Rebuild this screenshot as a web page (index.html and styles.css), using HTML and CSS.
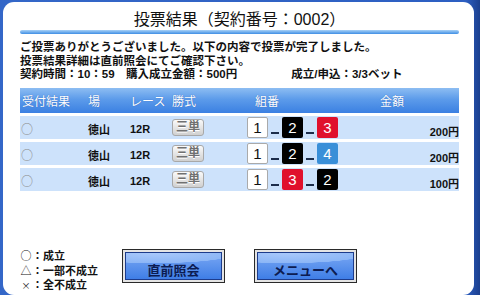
FILE: index.html
```html
<!DOCTYPE html>
<html lang="ja">
<head>
  <meta charset="UTF-8">
  <title>投票結果</title>
  <link rel="stylesheet" href="styles.css">
</head>
<body>
  <div class="panel">
    <h1 class="title">投票結果（契約番号：0002）</h1>
    <div class="rule"></div>

    <div class="info">
      <p>ご投票ありがとうございました。以下の内容で投票が完了しました。</p>
      <p>投票結果詳細は直前照会にてご確認下さい。</p>
      <p class="summary">
        <span>契約時間：10：59　購入成立金額：500円</span>
        <span class="count">成立/申込：3/3ベット</span>
      </p>
    </div>

    <div class="table">
      <div class="head">
        <span class="c-res">受付結果</span>
        <span class="c-jo">場</span>
        <span class="c-race">レース</span>
        <span class="c-type">勝式</span>
        <span class="c-combo h-combo">組番</span>
        <span class="c-amt h-amt">金額</span>
      </div>

      <div class="row">
        <span class="c-res mark">○</span>
        <span class="c-jo">徳山</span>
        <span class="c-race">12R</span>
        <span class="c-type"><span class="badge">三単</span></span>
        <span class="c-combo">
          <span class="num n1">1</span><span class="dash"></span>
          <span class="num n2">2</span><span class="dash"></span>
          <span class="num n3">3</span>
        </span>
        <span class="c-amt amt">200円</span>
      </div>

      <div class="row">
        <span class="c-res mark">○</span>
        <span class="c-jo">徳山</span>
        <span class="c-race">12R</span>
        <span class="c-type"><span class="badge">三単</span></span>
        <span class="c-combo">
          <span class="num n1">1</span><span class="dash"></span>
          <span class="num n2">2</span><span class="dash"></span>
          <span class="num n4">4</span>
        </span>
        <span class="c-amt amt">200円</span>
      </div>

      <div class="row">
        <span class="c-res mark">○</span>
        <span class="c-jo">徳山</span>
        <span class="c-race">12R</span>
        <span class="c-type"><span class="badge">三単</span></span>
        <span class="c-combo">
          <span class="num n1">1</span><span class="dash"></span>
          <span class="num n3">3</span><span class="dash"></span>
          <span class="num n2">2</span>
        </span>
        <span class="c-amt amt">100円</span>
      </div>
    </div>

    <div class="footer">
      <ul class="legend">
        <li><span class="sym">○</span>：成立</li>
        <li><span class="sym">△</span>：一部不成立</li>
        <li><span class="sym small">×</span>：全不成立</li>
      </ul>
      <button class="btn"><span>直前照会</span></button>
      <button class="btn"><span>メニューへ</span></button>
    </div>
  </div>
</body>
</html>
```

FILE: styles.css
```css
html, body {
  margin: 0;
  padding: 0;
}

body {
  width: 480px;
  height: 295px;
  overflow: hidden;
  background: linear-gradient(to right, #3467c8 0%, #2d5fc2 97%, #1b3f8e 100%);
  font-family: "Liberation Sans", "Noto Sans CJK JP", sans-serif;
  color: #111;
}

.panel {
  box-sizing: border-box;
  margin: 2px 6px 0 3px;
  height: 293px;
  background: #fff;
  border-radius: 11px;
  padding: 0 15px 0 17px;
  display: flex;
  flex-direction: column;
}

.title {
  margin: 0;
  padding-top: 7px;
  font-size: 16px;
  line-height: 21px;
  font-weight: normal;
  text-align: center;
  color: #111;
}

.rule {
  height: 4px;
  border-radius: 2px;
  background: linear-gradient(to bottom, #a9d2f7, #3f8ee4);
}

.info {
  margin-top: 7px;
  font-size: 11.5px;
  font-weight: bold;
}

.info p {
  margin: 0;
  line-height: 13.5px;
}

.summary {
  display: flex;
}

.count {
  margin-left: 54px;
}

.table {
  margin-top: 6px;
  display: flex;
  flex-direction: column;
  gap: 3px;
}

.head, .row {
  display: grid;
  grid-template-columns: 68px 42px 42px 75px 1fr 110px;
  align-items: center;
}

.head {
  height: 25px;
  background: linear-gradient(to bottom, #8dbdf2 0%, #5c9bea 45%, #3b80e2 100%);
  color: #fff;
  font-size: 12px;
  text-shadow: 0 0 1px #2a5db0;
}

.head .c-res {
  padding-left: 2px;
}

.h-combo {
  padding-left: 8px;
}

.h-amt {
  padding-left: 31px;
}

.row {
  height: 23px;
  background: #cde2fb;
  font-size: 11px;
  font-weight: bold;
}

.mark {
  padding: 2px 0 0 1px;
  color: #8a8a8a;
  font-family: "Noto Sans CJK JP", sans-serif;
  font-weight: normal;
  font-size: 12px;
}

.row .c-jo, .row .c-race {
  padding-top: 3px;
}

.badge {
  display: inline-block;
  width: 30px;
  height: 15px;
  line-height: 15px;
  text-align: center;
  border: 1px solid #a8a8a8;
  border-radius: 3px;
  background: linear-gradient(to bottom, #fafafa, #d0d0d0);
  color: #707070;
  font-size: 12px;
  text-shadow: 0 1px 0 #fff;
}

.c-combo {
  display: flex;
  align-items: center;
}

.num {
  box-sizing: border-box;
  width: 21px;
  height: 21px;
  line-height: 21px;
  text-align: center;
  font-size: 15px;
  font-weight: normal;
  border-radius: 2px;
}

.n1 {
  background: #fff;
  border: 1px solid #aaa;
  line-height: 19px;
  color: #111;
}

.n2 {
  background: #000;
  color: #fff;
}

.n3 {
  background: #e0102c;
  color: #fff;
}

.n4 {
  background: #3a8fd8;
  color: #fff;
}

.dash {
  width: 8px;
  height: 2px;
  margin: 11px 3px 0 3px;
  background: #1d2d4a;
}

.amt {
  text-align: right;
  padding-top: 7px;
}

.footer {
  margin-top: auto;
  display: flex;
  align-items: flex-start;
  padding-bottom: 2px;
}

.legend {
  list-style: none;
  margin: 0;
  padding: 0;
  width: 102px;
  font-size: 11px;
  font-weight: bold;
}

.legend li {
  line-height: 14px;
}

.sym {
  display: inline-block;
  width: 12px;
  text-align: center;
  font-family: "Noto Sans CJK JP", sans-serif;
  font-weight: normal;
  font-size: 11px;
}

.sym.small {
  font-size: 9px;
}

.btn {
  box-sizing: border-box;
  width: 103px;
  height: 34px;
  margin-top: 1px;
  padding: 2px;
  border: 1px solid #2a2a2a;
  background: #e4e4e4;
  cursor: pointer;
}

.btn + .btn {
  margin-left: 29px;
}

.btn span {
  box-sizing: border-box;
  display: block;
  height: 100%;
  padding-top: 7px;
  border: 1px solid #1d3c8c;
  background:
    radial-gradient(ellipse 120% 55% at 30% 0%, #a9c9fb 0%, #8cb6f6 70%, transparent 72%),
    linear-gradient(to bottom, #7aa8f4, #3f7ee6);
  color: #0c1c52;
  font-family: "Noto Sans CJK JP", sans-serif;
  font-size: 13px;
  font-weight: bold;
  line-height: 20px;
}
```
